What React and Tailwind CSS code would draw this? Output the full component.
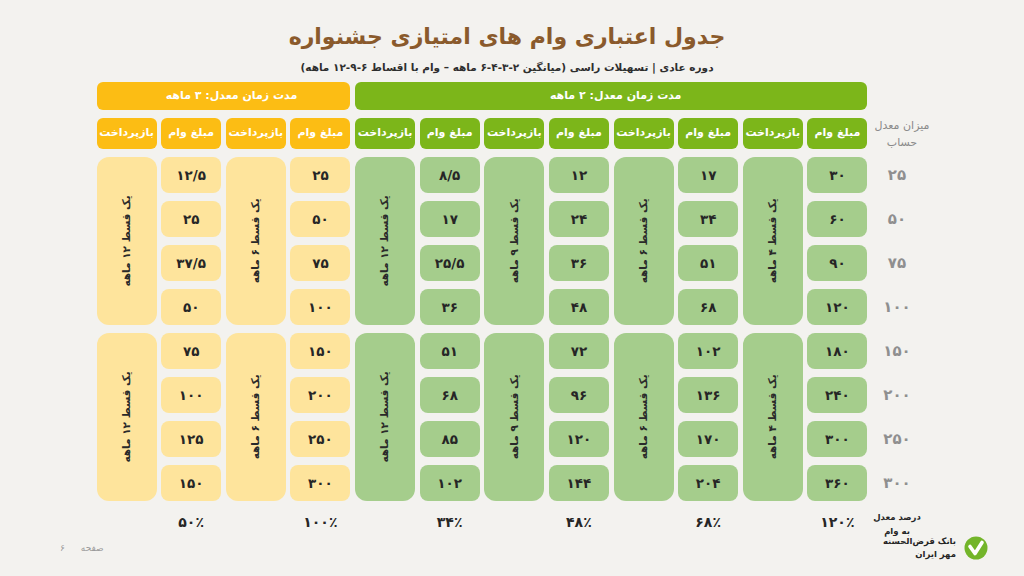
import React from 'react';

const colStart = ['', 'col-start-1', 'col-start-2', 'col-start-3', 'col-start-4', 'col-start-5', 'col-start-6', 'col-start-7', 'col-start-8', 'col-start-9', 'col-start-10', 'col-start-11', 'col-start-12', 'col-start-13'];
const rowStart = ['', 'row-start-1', 'row-start-2', 'row-start-3', 'row-start-4', 'row-start-5', 'row-start-6', 'row-start-7', 'row-start-8', 'row-start-9', 'row-start-10', 'row-start-11'];

const groups = [
  { col: 2, tone: 'green', amounts: ['۳۰', '۶۰', '۹۰', '۱۲۰', '۱۸۰', '۲۴۰', '۳۰۰', '۳۶۰'], repay: 'یک قسط ۴ ماهه', pct: '۱۲۰٪' },
  { col: 4, tone: 'green', amounts: ['۱۷', '۳۴', '۵۱', '۶۸', '۱۰۲', '۱۳۶', '۱۷۰', '۲۰۴'], repay: 'یک قسط ۶ ماهه', pct: '۶۸٪' },
  { col: 6, tone: 'green', amounts: ['۱۲', '۲۴', '۳۶', '۴۸', '۷۲', '۹۶', '۱۲۰', '۱۴۴'], repay: 'یک قسط ۹ ماهه', pct: '۴۸٪' },
  { col: 8, tone: 'green', amounts: ['۸/۵', '۱۷', '۲۵/۵', '۳۶', '۵۱', '۶۸', '۸۵', '۱۰۲'], repay: 'یک قسط ۱۲ ماهه', pct: '۳۴٪' },
  { col: 10, tone: 'yellow', amounts: ['۲۵', '۵۰', '۷۵', '۱۰۰', '۱۵۰', '۲۰۰', '۲۵۰', '۳۰۰'], repay: 'یک قسط ۶ ماهه', pct: '۱۰۰٪' },
  { col: 12, tone: 'yellow', amounts: ['۱۲/۵', '۲۵', '۳۷/۵', '۵۰', '۷۵', '۱۰۰', '۱۲۵', '۱۵۰'], repay: 'یک قسط ۱۲ ماهه', pct: '۵۰٪' },
];

const levels = ['۲۵', '۵۰', '۷۵', '۱۰۰', '۱۵۰', '۲۰۰', '۲۵۰', '۳۰۰'];

const tones = {
  green: { head: 'bg-[#7cb61a]', cell: 'bg-[#a5cd8c]' },
  yellow: { head: 'bg-[#fcbd14]', cell: 'bg-[#fee49c]' },
};

function Logo() {
  return (
    <svg width="24" height="24" viewBox="0 0 24 24">
      <circle cx="12" cy="12" r="11.5" fill="#73b52a" />
      <path d="M6 10.5 L11 17.5 L18 6.5" fill="none" stroke="#fff" strokeWidth="3.6" strokeLinejoin="round" strokeLinecap="round" />
    </svg>
  );
}

function Group({ col, tone, amounts, repay, pct }) {
  const t = tones[tone];
  return (
    <>
      <div className={`${colStart[col]} row-start-2 ${t.head} rounded-md flex items-center justify-center text-white text-[11px] font-bold`}>مبلغ وام</div>
      <div className={`${colStart[col + 1]} row-start-2 ${t.head} rounded-md flex items-center justify-center text-white text-[11px] font-bold`}>بازپرداخت</div>
      {amounts.map((a, i) => (
        <div key={i} className={`${colStart[col]} ${rowStart[i + 3]} ${t.cell} rounded-lg flex items-center justify-center text-[13.5px] font-bold text-[#262626]`}>
          {a}
        </div>
      ))}
      {[3, 7].map((r) => (
        <div key={r} className={`${colStart[col + 1]} ${rowStart[r]} row-span-4 ${t.cell} rounded-xl flex items-center justify-center`}>
          <span className="-rotate-90 whitespace-nowrap text-[10.5px] font-bold text-[#2a2a2a]">{repay}</span>
        </div>
      ))}
      <div className={`${colStart[col]} row-start-11 flex items-center justify-center text-[14px] font-bold text-[#262626] pt-1`}>{pct}</div>
    </>
  );
}

export default function App() {
  return (
    <div className="w-[1024px] h-[576px] bg-[#f3f2ef] flex flex-col font-['DejaVu_Sans',sans-serif] overflow-hidden" dir="rtl">
      <div className="flex flex-col items-center pt-[20px] pr-[10px]">
        <h1 className="text-[22px] leading-[34px] font-bold text-[#8a5a2c]">جدول اعتباری وام های امتیازی جشنواره</h1>
        <p className="text-[10.5px] leading-[18px] font-bold text-[#2e2e2e] mt-[4px]">
          دوره عادی | تسهیلات راسی (میانگین ۲-۳-۴-۶ ماهه – وام با اقساط ۶-۹-۱۲ ماهه)
        </p>
      </div>

      <div className="flex pr-[102px] mt-[6px]">
        <div className="grid grid-cols-[50px_repeat(12,60px)] grid-rows-[28px_31px_repeat(8,36px)_22px] gap-x-[4.64px] gap-y-2">
          <div className="col-start-2 col-span-8 row-start-1 bg-[#7cb61a] rounded-md flex items-center pr-[186px] text-white text-[11px] font-bold">
            مدت زمان معدل: ۲ ماهه
          </div>
          <div className="col-start-10 col-span-4 row-start-1 bg-[#fcbd14] rounded-md flex items-center justify-center pl-[16px] text-white text-[11px] font-bold">
            مدت زمان معدل: ۳ ماهه
          </div>

          <div className="col-start-1 row-start-2 flex flex-col items-center justify-center text-[#8a8a8a] text-[11px] leading-[17px] whitespace-nowrap pl-[10px]">
            <span>میزان معدل</span>
            <span>حساب</span>
          </div>

          {levels.map((l, i) => (
            <div key={l} className={`col-start-1 ${rowStart[i + 3]} flex items-center justify-center text-[15px] font-bold text-[#8f8f8f]`}>
              {l}
            </div>
          ))}

          {groups.map((g) => (
            <Group key={g.col} {...g} />
          ))}

          <div className="col-start-1 row-start-11 flex flex-col items-center text-[8.5px] leading-[14px] font-bold text-[#262626] whitespace-nowrap pt-[1px]">
            <span>درصد معدل</span>
            <span>به وام</span>
          </div>
        </div>
      </div>

      <div className="flex items-end justify-between mt-auto pb-[15px] pr-[36px] pl-[60px]">
        <div className="flex items-center gap-2">
          <Logo />
          <div className="flex flex-col text-[8.5px] leading-[13px] font-bold text-[#262626]">
            <span>بانک قرض‌الحسنه</span>
            <span>مهر ایران</span>
          </div>
        </div>
        <div className="flex gap-4 text-[9px] text-[#9a9a9a] mb-[6px]">
          <span>صفحه</span>
          <span>۶</span>
        </div>
      </div>
    </div>
  );
}
